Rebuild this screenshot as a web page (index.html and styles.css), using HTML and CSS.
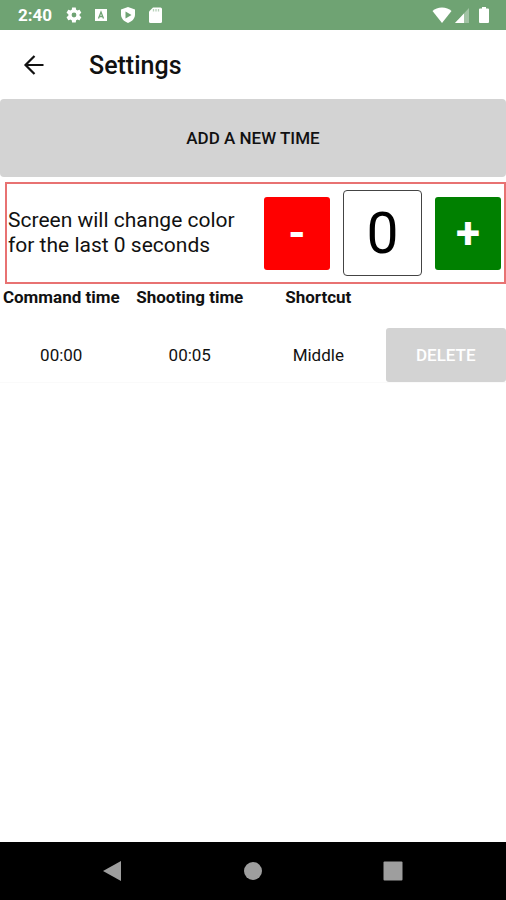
FILE: index.html
```html
<!DOCTYPE html>
<html lang="en">
<head>
<meta charset="utf-8">
<meta name="viewport" content="width=device-width, initial-scale=1">
<title>Settings</title>
<link rel="stylesheet" href="styles.css">
</head>
<body>
<div class="status">
  <span class="clock">2:40</span>
  <div class="notices">
    <svg width="18" height="18" viewBox="0 0 24 24" fill="currentColor" aria-hidden="true"><path fill-rule="evenodd" d="M19.400 13c0-.3.1-.6.1-1s0-.7-.1-1l2.100-1.600c.2-.2.3-.5.1-.7l-2-3.500c-.1-.2-.4-.3-.6-.2l-2.500 1c-.5-.4-1.100-.7-1.700-1l-.4-2.600c0-.2-.2-.4-.5-.4h-4c-.2 0-.4.2-.5.4L9 5c-.6.3-1.100.6-1.700 1l-2.500-1c-.2-.1-.5 0-.6.200l-2 3.500c-.1.200-.1.500.1.700L4.500 11c0 .3-.1.700-.1 1s0 .7.1 1l-2.200 1.600c-.2.2-.2.500-.1.700l2 3.500c.1.200.4.300.6.200l2.500-1c.5.400 1.100.7 1.700 1l.4 2.600c0 .2.200.4.500.4h4c.2 0 .5-.2.500-.4L14.800 19c.6-.3 1.200-.6 1.700-1l2.500 1c.2.100.5 0 .6-.2l2-3.500c.1-.2.1-.5-.1-.7zM12 15.200a3.200 3.200 0 1 1 0-6.400 3.200 3.200 0 0 1 0 6.400z"/></svg>
    <svg width="18" height="18" viewBox="0 0 18 18" aria-hidden="true"><path fill="currentColor" d="M3 3h12v12H3z"/><path d="M6.500 12.500 9 6l2.500 6.500M7.500 10.500h3" fill="none" stroke="#6fa373" stroke-width="1.300"/></svg>
    <svg width="18" height="18" viewBox="0 0 18 18" aria-hidden="true"><path fill="currentColor" d="M9 1l7 2.600v5c0 4-3 7-7 8.400-4-1.400-7-4.400-7-8.400v-5z"/><path fill="#6fa373" d="M6.500 5.500v7L12.500 9z"/></svg>
    <svg width="18" height="18" viewBox="0 0 18 18" aria-hidden="true"><path fill="currentColor" d="M7 1.500h7.500A1.500 1.500 0 0 1 16 3v12.500a1.500 1.500 0 0 1-1.500 1.500h-10A1.500 1.500 0 0 1 3 15.500v-10z"/><path d="M7.500 3v2.500M10 3v2.500M12.500 3v2.500" stroke="#6fa373" stroke-opacity=".5" stroke-width="1.300"/></svg>
  </div>
  <div class="signals">
    <svg width="20" height="18" viewBox="0 0 20 18" fill="currentColor" aria-hidden="true"><path d="M10 17 .5 5C3 3 6 1.500 10 1.500S17 3 19.500 5z"/></svg>
    <svg width="16" height="18" viewBox="0 0 16 18" fill="currentColor" aria-hidden="true"><path fill-opacity=".35" d="M15 2v15H1z"/><path d="M10 7.400V17H1z"/></svg>
    <svg width="12" height="18" viewBox="0 0 12 18" fill="currentColor" aria-hidden="true"><path d="M4 1h4v1.500h2a1 1 0 0 1 1 1V16a1 1 0 0 1-1 1H2a1 1 0 0 1-1-1V3.500a1 1 0 0 1 1-1h2z"/></svg>
  </div>
</div>
<header class="appbar">
  <button class="back" type="button" aria-label="Back"><svg width="22" height="22" viewBox="0 0 22 22" fill="none" stroke="currentColor" stroke-width="2.200" aria-hidden="true"><path d="M11.500 2 2.500 11l9 9M2.500 11h18"/></svg></button>
  <h1>Settings</h1>
</header>
<main>
  <button class="add" type="button">ADD A NEW TIME</button>
  <section class="warning">
    <label class="message" for="seconds">Screen will change color for the last 0 seconds</label>
    <button class="step minus" type="button">-</button>
    <input class="seconds" id="seconds" type="text" inputmode="numeric" value="0">
    <button class="step plus" type="button">+</button>
  </section>
  <table class="times">
    <thead>
      <tr><th scope="col">Command time</th><th scope="col">Shooting time</th><th scope="col">Shortcut</th><td class="action"></td></tr>
    </thead>
    <tbody>
      <tr><td>00:00</td><td>00:05</td><td>Middle</td><td class="action"><button class="delete" type="button">DELETE</button></td></tr>
    </tbody>
  </table>
</main>
<nav class="system">
  <button type="button" aria-label="Back"><svg width="22" height="22" viewBox="0 0 22 22" aria-hidden="true"><path fill="currentColor" d="M19 1v20L1 11z"/></svg></button>
  <button type="button" aria-label="Home"><svg width="22" height="22" viewBox="0 0 22 22" aria-hidden="true"><circle cx="11" cy="11" r="9" fill="currentColor"/></svg></button>
  <button type="button" aria-label="Overview"><svg width="22" height="22" viewBox="0 0 22 22" aria-hidden="true"><rect x="1.500" y="1.500" width="19" height="19" rx="1" fill="currentColor"/></svg></button>
</nav>
</body>
</html>
```
FILE: styles.css
```css
* {
  box-sizing: border-box;
}

body {
  display: flex;
  flex-direction: column;
  min-height: 100vh;
  margin: 0;
  background: #fff;
  color: #111;
  font-family: Roboto, "Liberation Sans", sans-serif;
  font-size: 17px;
}

button {
  padding: 0;
  border: 0;
  font: inherit;
  color: inherit;
}

svg {
  display: block;
}

.status {
  display: flex;
  align-items: center;
  height: 30px;
  padding: 0 16px 0 18px;
  background: #6fa373;
  color: #fff;
}

.clock {
  font-size: 17px;
  font-weight: 700;
}

.notices {
  display: flex;
  gap: 9px;
  margin-left: 13px;
}

.signals {
  display: flex;
  gap: 4px;
  margin-left: auto;
}

.signals svg:first-child {
  margin-right: -2px;
}

.signals svg:last-child {
  margin-left: 4px;
}

.appbar {
  display: flex;
  align-items: center;
  height: 69px;
  padding: 0 23px;
}

.back {
  background: none;
}

h1 {
  margin: 2px 0 0 44px;
  font-size: 25px;
  font-weight: 500;
}

main {
  flex: 1;
}

.add {
  display: block;
  width: 100%;
  height: 78px;
  border-radius: 4px;
  background: #d3d3d3;
  font-weight: 500;
}

.warning {
  display: flex;
  align-items: center;
  gap: 13px;
  margin: 5px 0 0 5px;
  padding: 6px 3px 6px 1px;
  border: 2px solid #e87272;
}

.message {
  flex: 1;
  font-size: 21px;
  line-height: 25px;
}

.step {
  width: 66px;
  height: 73px;
  border-radius: 3px;
  color: #fff;
  font-size: 44px;
  font-weight: 700;
}

.minus {
  background: #f00;
}

.plus {
  background: #008000;
}

.seconds {
  width: 79px;
  height: 86px;
  padding: 0;
  border: 1px solid #444;
  border-radius: 4px;
  background: #fff;
  color: #000;
  font: inherit;
  font-size: 57px;
  text-align: center;
}

.times {
  width: 100%;
  table-layout: fixed;
  border-collapse: collapse;
  text-align: center;
}

.times th,
.times td {
  width: 25.4%;
  padding: 0 6px 0 0;
  white-space: nowrap;
}

.times th {
  height: 44px;
  padding-top: 3px;
  font-weight: 700;
  line-height: 20px;
  vertical-align: top;
}

.times .action {
  width: auto;
  padding: 0;
}

.times tbody tr {
  border-bottom: 1px solid #fafafa;
}

.delete {
  display: block;
  width: 100%;
  height: 54px;
  border-radius: 3px;
  background: #d3d3d3;
  color: #fff;
  font-weight: 500;
}

.system {
  display: flex;
  justify-content: center;
  height: 58px;
  background: #000;
  color: #9e9e9e;
}

.system button {
  display: grid;
  place-items: center;
  width: 27.7%;
  background: none;
}
```
